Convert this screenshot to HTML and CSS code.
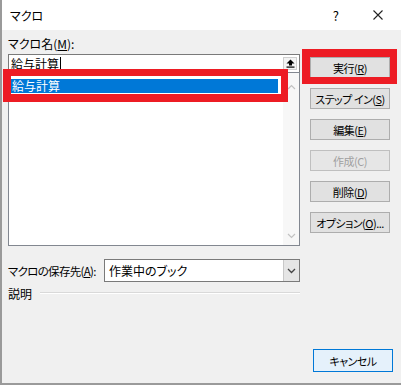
FILE: index.html
```html
<!DOCTYPE html>
<html lang="ja">
<head>
<meta charset="UTF-8" />
<title>マクロ</title>
<link rel="stylesheet" href="styles.css">
</head>
<body>

<div class="dialog">
  <div class="titlebar">
    <span class="title">マクロ</span>
    <span class="help">?</span>
    <span class="close">
      <svg width="10" height="10" viewBox="0 0 10 10"><path d="M0.5 0.5L9.5 9.5M9.5 0.5L0.5 9.5" stroke="#222" stroke-width="1.1" fill="none"/></svg>
    </span>
  </div>

  <div class="content">
    <div class="left">
      <div class="label">マクロ名(<u>M</u>):</div>
      <div class="namebox">
        <span class="nametext">給与計算<span class="caret"></span></span>
        <span class="upbtn">
          <svg width="9" height="9" viewBox="0 0 9 9"><path d="M4.5 0.5L8.5 4.5H6V6.5H3V4.5H0.5Z" fill="#000"/><rect x="0.5" y="7.5" width="8" height="1.2" fill="#000"/></svg>
        </span>
      </div>
      <div class="listbox">
        <div class="items">
          <div class="item selected">給与計算</div>
        </div>
        <div class="scrollbar">
          <svg width="9" height="6" viewBox="0 0 9 6"><path d="M1 5L4.5 1.5L8 5" stroke="#c2c2c2" stroke-width="1.2" fill="none"/></svg>
          <svg width="9" height="6" viewBox="0 0 9 6"><path d="M1 1L4.5 4.5L8 1" stroke="#c2c2c2" stroke-width="1.2" fill="none"/></svg>
        </div>
      </div>
      <div class="saverow">
        <span class="savelabel">マクロの保存先(<u>A</u>):</span>
        <div class="combo">
          <span class="combotext">作業中のブック</span>
          <span class="drop">
            <svg width="9" height="6" viewBox="0 0 9 6"><path d="M1 1L4.5 4.5L8 1" stroke="#444" stroke-width="1.3" fill="none"/></svg>
          </span>
        </div>
      </div>
      <div class="desc">
        <span>説明</span>
        <span class="rule"></span>
      </div>
    </div>

    <div class="right">
      <button class="btn">実行(<u>R</u>)</button>
      <button class="btn">ステップ イン(<u>S</u>)</button>
      <button class="btn">編集(<u>E</u>)</button>
      <button class="btn" disabled>作成(C)</button>
      <button class="btn">削除(<u>D</u>)</button>
      <button class="btn">オプション(<u>O</u>)...</button>
      <button class="btn btn-default">キャンセル</button>
    </div>
  </div>

  <div class="mark mark-list"></div>
  <div class="mark mark-run"></div>
</div>

</body>
</html>
```

FILE: styles.css
```css
body {
  margin: 0;
  background: #f0f0f0;
  font-family: "Noto Sans CJK JP", "Noto Sans", sans-serif;
  font-size: 12px;
  font-feature-settings: "palt";
  color: #000;
  white-space: nowrap;
}
.dialog {
  position: relative;
  width: 401px;
  height: 385px;
  box-sizing: border-box;
  border-left: 2px solid #9a9a9a;
  border-bottom: 2px solid #9a9a9a;
  background: #f0f0f0;
  overflow: hidden;
}
.titlebar {
  height: 30px;
  background: #fff;
  display: flex;
  align-items: center;
  padding-left: 8px;
}
.title {
  flex: 1;
}
.help {
  font-size: 13px;
  margin-right: 34px;
}
.close {
  display: flex;
  margin-right: 18px;
}
.content {
  display: flex;
  height: 353px;
  padding: 6px 0 0 6px;
  box-sizing: border-box;
}
.left {
  width: 292px;
  display: flex;
  flex-direction: column;
}
.label {
  height: 17px;
  line-height: 16px;
}
u {
  text-decoration: underline;
  text-underline-offset: 1px;
}
.namebox {
  height: 18px;
  box-sizing: border-box;
  border: 1px solid #7a7a7a;
  border-bottom: none;
  background: #fff;
  display: flex;
  align-items: center;
  padding: 0 2px;
  margin-top: 1px;
}
.nametext {
  flex: 1;
  display: flex;
  align-items: center;
  line-height: 16px;
}
.caret {
  display: inline-block;
  width: 1px;
  height: 13px;
  background: #000;
  margin-left: 1px;
}
.upbtn {
  width: 14px;
  height: 13px;
  box-sizing: border-box;
  border: 1px solid #cfcfcf;
  background: #f3f3f3;
  display: flex;
  align-items: center;
  justify-content: center;
}
.listbox {
  height: 174px;
  box-sizing: border-box;
  border: 1px solid #828790;
  background: #fff;
  display: flex;
}
.items {
  flex: 1;
  padding: 6px 5px 0 1px;
}
.item {
  height: 14px;
  line-height: 14px;
  padding-left: 2px;
}
.selected {
  background: #0078d7;
  color: #fff;
}
.scrollbar {
  width: 16px;
  background: #f7f7f7;
  display: flex;
  flex-direction: column;
  justify-content: space-between;
  align-items: center;
  padding: 11px 0 6px;
}
.saverow {
  display: flex;
  align-items: center;
  margin-top: 13px;
  height: 23px;
}
.savelabel {
  width: 96px;
  font-size: 11.5px;
  letter-spacing: -0.7px;
}
.combo {
  flex: 1;
  height: 23px;
  box-sizing: border-box;
  border: 1px solid #7a7a7a;
  background: #fff;
  display: flex;
  align-items: center;
}
.combotext {
  flex: 1;
  padding-left: 4px;
}
.drop {
  width: 15px;
  height: 21px;
  background: #e5e5e5;
  border-left: 1px solid #c8c8c8;
  display: flex;
  align-items: center;
  justify-content: center;
}
.desc {
  display: flex;
  align-items: center;
  gap: 8px;
  margin-top: 3px;
  height: 16px;
}
.rule {
  flex: 1;
  height: 1px;
  background: #d9d9d9;
  border-bottom: 1px solid #fff;
}
.right {
  width: 80px;
  margin-left: 10px;
  display: flex;
  flex-direction: column;
  gap: 10px;
  padding: 21px 0 11px;
}
.btn {
  height: 21px;
  box-sizing: border-box;
  border: 1px solid #adadad;
  background: #e1e1e1;
  font-family: inherit;
  font-size: 11px;
  font-feature-settings: "palt";
  letter-spacing: -0.5px;
  color: #000;
  padding: 0;
  line-height: 18px;
  white-space: nowrap;
  overflow: visible;
}
.btn:disabled {
  border-color: #bfbfbf;
  background: #e6e6e6;
  color: #a0a0a0;
}
.btn-default {
  margin-top: auto;
  margin-left: 3px;
  width: 80px;
  height: 23px;
  border-color: #0078d7;
  background: #e5f1fb;
}
.mark {
  position: absolute;
  border-style: solid;
  border-color: #ed1c24;
}
.mark-list {
  left: 1px;
  top: 69px;
  width: 270px;
  height: 18px;
  border-width: 7px 7px 8px 8px;
}
.mark-run {
  left: 300px;
  top: 49px;
  width: 80px;
  height: 20px;
  border-width: 8px 7px 7px 8px;
}
```
